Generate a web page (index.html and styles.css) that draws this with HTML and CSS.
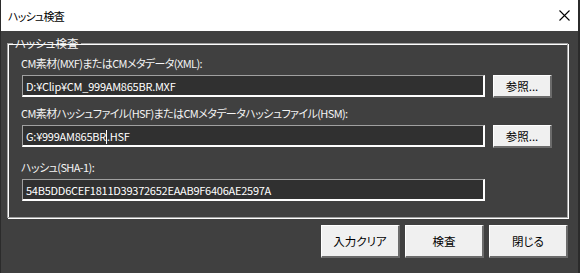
FILE: index.html
```html
<!DOCTYPE html>
<html lang="ja">
<head>
<meta charset="utf-8">
<title>ハッシュ検査</title>
<link rel="stylesheet" href="styles.css">
</head>
<body>
<div class="window">
  <div class="titlebar">
    <span class="title">ハッシュ検査</span>
    <svg class="close" width="11" height="11" viewBox="0 0 11 11"><path d="M0.5 0.5L10.5 10.5M10.5 0.5L0.5 10.5" stroke="#000" stroke-width="1.1" fill="none"/></svg>
  </div>
  <div class="client">
    <fieldset class="group">
      <legend class="legend">ハッシュ検査</legend>
      <div class="label l1">CM素材(MXF)またはCMメタデータ(XML):</div>
      <div class="row">
        <div class="field">D:¥Clip¥CM_999AM865BR.MXF</div>
        <div class="btn browse">参照...</div>
      </div>
      <div class="label l2">CM素材ハッシュファイル(HSF)またはCMメタデータハッシュファイル(HSM):</div>
      <div class="row">
        <div class="field">G:¥999AM865BR<span class="caret"></span>.HSF</div>
        <div class="btn browse">参照...</div>
      </div>
      <div class="label l3">ハッシュ(SHA-1):</div>
      <div class="row">
        <div class="field">54B5DD6CEF1811D39372652EAAB9F6406AE2597A</div>
      </div>
    </fieldset>
    <div class="footer">
      <div class="btn big">入力クリア</div>
      <div class="btn big">検査</div>
      <div class="btn big">閉じる</div>
    </div>
  </div>
</div>
</body>
</html>
```
FILE: styles.css
```css
html, body {
  margin: 0;
  padding: 0;
  background: #2b2b2b;
}
body {
  width: 580px;
  height: 273px;
  overflow: hidden;
  font-family: "Noto Sans CJK JP", "Noto Sans", sans-serif;
  font-size: 12px;
  line-height: 14px;
  font-feature-settings: "palt" 1;
}
.window {
  width: 579px;
  height: 273px;
  border-left: 1px solid #2b2b2b;
  border-right: 1px solid #2b2b2b;
  box-sizing: border-box;
  display: flex;
  flex-direction: column;
}
.titlebar {
  height: 31px;
  background: #ffffff;
  display: flex;
  align-items: center;
  justify-content: space-between;
  padding: 0 8px 0 7px;
  flex: none;
}
.title {
  color: #000;
  font-size: 11px;
  letter-spacing: -0.8px;
}
.client {
  flex: 1;
  background: #404040;
  padding: 5px 10px 0 6px;
  display: flex;
  flex-direction: column;
}
.group {
  margin: 0;
  padding: 6px 0 16px 13px;
  border: 1px solid #a0a0a0;
  box-shadow: inset 1px 1px 0 #ffffff, 1px 1px 0 #ffffff;
  min-width: 0;
  color: #f4f4f4;
}
.legend {
  padding: 0 3px 0 2px;
  margin-left: -8px;
  color: #f4f4f4;
  line-height: 14px;
  font-size: 11.5px;
}
.label {
  height: 14px;
  white-space: nowrap;
  font-size: 11px;
  letter-spacing: -0.6px;
}
.l2 { margin-top: 8px; }
.l3 { margin-top: 12px; }
.row {
  display: flex;
  align-items: flex-start;
  gap: 8px;
  margin-top: 5px;
  margin-left: 1px;
}
.field {
  width: 463px;
  height: 22px;
  box-sizing: border-box;
  background: #303030;
  border-top: 1px solid #a0a0a0;
  border-left: 1px solid #a0a0a0;
  border-right: 2px solid #ffffff;
  border-bottom: 2px solid #ffffff;
  color: #ffffff;
  padding: 3px 3px 0 3px;
  white-space: nowrap;
  line-height: 15px;
  font-size: 11px;
  letter-spacing: -0.25px;
}
.caret {
  display: inline-block;
  width: 1px;
  height: 14px;
  background: #ffffff;
  vertical-align: -3px;
}
.btn {
  background: #f0f0f0;
  color: #000;
  box-sizing: border-box;
  border-top: 1px solid #ffffff;
  border-left: 1px solid #ffffff;
  border-right: 2px solid #6b6b6b;
  border-bottom: 2px solid #6b6b6b;
  display: flex;
  align-items: center;
  justify-content: center;
  white-space: nowrap;
  font-size: 11.5px;
}
.browse {
  width: 59px;
  height: 23px;
}
.footer {
  display: flex;
  justify-content: flex-end;
  gap: 5px;
  margin-top: 7px;
}
.big {
  width: 79px;
  height: 33px;
}
```
